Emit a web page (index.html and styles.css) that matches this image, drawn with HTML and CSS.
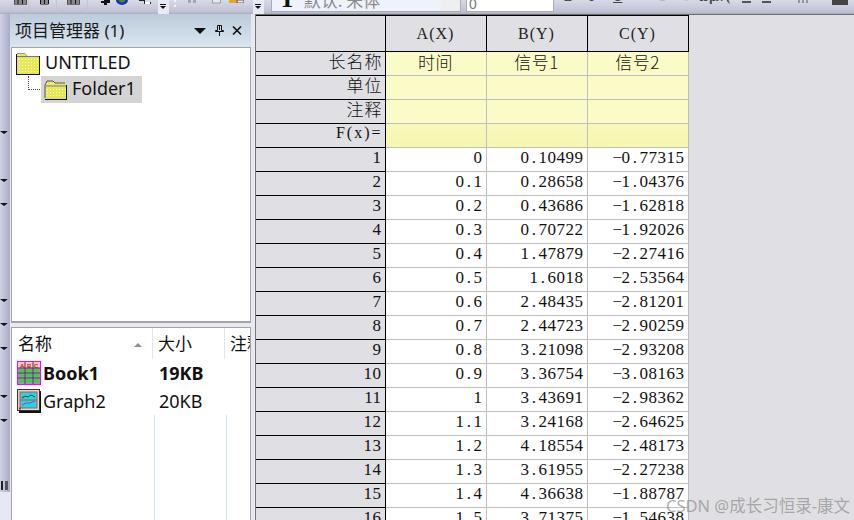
FILE: index.html
```html
<!DOCTYPE html>
<html lang="zh">
<head>
<meta charset="utf-8">
<title>Origin</title>
<link rel="stylesheet" href="styles.css">
</head>
<body>
<div class="app">
  <header class="toolbar">
    <div class="tbgroup g1">
      <svg class="ic i1" width="13" height="5" viewBox="0 0 13 5"><path d="M0 0h13v4H0zM4 0v4M8.500 0v4M0 2h13" fill="#fff" stroke="#111"/></svg>
      <span class="sep s1"></span>
      <svg class="ic i2" width="9" height="5" viewBox="0 0 9 5"><path d="M.5 0h8v4h-8zM4.500 0v4M0 2h9" fill="#fff" stroke="#111"/></svg>
      <span class="sep s2"></span>
      <svg class="ic i3" width="13" height="5" viewBox="0 0 13 5"><path d="M0 0h13v4H0zM4 0v4M8.500 0v4M0 2h13" fill="#fff" stroke="#111"/></svg>
      <span class="sep s3"></span>
      <svg class="ic i4" width="9" height="5" viewBox="0 0 9 5"><path d="M3 0h6v3H6v2H3V3H0V1h3z" fill="#111"/></svg>
      <svg class="ic i5" width="12" height="5" viewBox="0 0 12 5"><path d="M0 0h12a6 5 0 0 1-12 0z" fill="#1d2fb8"/><path d="M3 0h6a3 2.500 0 0 1-6 0z" fill="#4a8a2a"/></svg>
      <svg class="ic i6" width="12" height="5" viewBox="0 0 12 5"><path d="M0 0h6v2h6v2H5V1H0z" fill="#222"/><path d="M6 2h5v2H6z" fill="#fff"/></svg>
      <span class="chev"></span>
    </div>
    <div class="tbgroup g2">
      <span class="grip"></span>
      <svg class="ic i7" width="9" height="4" viewBox="0 0 9 4"><path d="M0 0h3v3H0zM5 0h3v3H5z" fill="#a6a7b2"/></svg>
      <svg class="ic i8" width="9" height="4" viewBox="0 0 9 4"><path d="M.5 0v3h8V0" fill="#e8e8ee" stroke="#9a9aa6"/></svg>
      <svg class="ic i9" width="15" height="3" viewBox="0 0 15 3"><path d="M0 0h8v3H0z" fill="#e8a23a"/><path d="M8 0h7v3H8z" fill="#eee" stroke="#555"/></svg>
      <span class="chev c2"></span>
    </div>
    <span class="grip g3"></span>
    <div class="combo c-font"><span class="t-icon">T</span><span class="combo-text">默认: 宋体</span></div>
    <div class="combo c-size"><span class="combo-num">0</span></div>
    <div class="tbgroup g4">
      <span class="fmt b">B</span><span class="fmt i">I</span><span class="fmt u">U</span>
      <span class="fmt sup">2</span><span class="fmt sub">1</span>
      <span class="fmt wp">ωp</span><span class="fmt lam">λ</span><span class="fmt par">(</span>
      <span class="dash d1"></span><span class="dash d2"></span>
      <svg class="ic i10" width="10" height="3" viewBox="0 0 10 3"><path d="M1 0v3M5 0v3M9 0v3" stroke="#555"/></svg>
      <span class="block"></span>
    </div>
  </header>

  <div class="main">
    <aside class="strip">
      <i class="tick"></i><i></i><i class="tick"></i><i class="tick"></i><i></i><i></i><i></i><i class="tick"></i><i class="tick"></i><i class="tick"></i><i></i><i class="tick"></i><i class="tick"></i>
      <b class="more"></b>
    </aside>

    <section class="panel">
      <div class="title">
        <span class="title-text">项目管理器 (1)</span>
        <svg class="tb tb-a" width="12" height="6" viewBox="0 0 12 6"><path d="M0 0h12L6 6z" fill="#111"/></svg>
        <svg class="tb tb-b" width="9" height="11" viewBox="0 0 9 11"><path d="M2.500.5h4v5h2v1H.5v-1h2zM4.500 7v4M4.500 1v4" fill="none" stroke="#111"/></svg>
        <svg class="tb tb-c" width="10" height="9" viewBox="0 0 10 9"><path d="M1 .5l8 8M9 .5l-8 8" stroke="#111" stroke-width="1.600"/></svg>
      </div>

      <div class="tree">
        <div class="node root">
          <svg class="folder" width="24" height="22" viewBox="0 0 24 22"><defs><pattern id="dots" width="3" height="3" patternUnits="userSpaceOnUse"><rect width="3" height="3" fill="#e7e75a"/><rect width="1" height="1" fill="#ffffb0"/></pattern></defs><path d="M1 4V1.500L2 .5h7l2 2.500h12v18H1z" fill="url(#dots)"/><path d="M1 3.500h22" stroke="#777"/><path d="M1 .5h8l2 2.500" fill="none" stroke="#999"/><path d="M0 21.500h24M23.500 3v19M.5 1v20" stroke="#111" fill="none"/></svg>
          <span>UNTITLED</span>
        </div>
        <div class="node child">
          <span class="link"></span>
          <span class="selected">
            <svg class="folder" width="23" height="20" viewBox="0 0 23 20"><path d="M1 5l2-4h6l2 2h10l1 2v13H1z" fill="url(#dots)"/><path d="M1 18V5l2-4h6l2 2h10" fill="none" stroke="#555"/><path d="M2 6h20" stroke="#777"/><path d="M1 19.500h22M22.500 5v15" stroke="#111" fill="none"/></svg>
            <span>Folder1</span>
          </span>
        </div>
      </div>

      <div class="list">
        <div class="list-head">
          <div class="h h-name">名称<span class="sort"></span></div>
          <div class="h h-size">大小</div>
          <div class="h h-note">注释</div>
        </div>
        <div class="item strong">
          <svg class="file" width="24" height="24" viewBox="0 0 24 24">
            <rect x=".5" y=".5" width="23" height="23" fill="#9d93b8" stroke="#f0f"/>
            <rect x="1" y="1" width="22" height="6" fill="#f8c8c8"/>
            <text class="mini" x="3" y="6.500">A</text><text class="mini" x="10" y="6.500">B</text><text class="mini" x="17" y="6.500">C</text>
            <path d="M8 1v22M16 1v22M1 7h22M1 12h22M1 17h22" stroke="#444"/>
            <path d="M2 9.500h5M9 9.500h6M17 9.500h5M2 14.500h5M9 14.500h6M17 14.500h5M2 20h5M9 20h6M17 20h5" stroke="#20e020" stroke-width="2"/>
          </svg>
          <span class="n">Book1</span><span class="s">19KB</span>
        </div>
        <div class="item">
          <svg class="file" width="24" height="24" viewBox="0 0 24 24">
            <rect x="2" y="2" width="22" height="22" fill="#111"/>
            <rect x=".5" y=".5" width="22" height="21" fill="#d8d8d8" stroke="#333"/>
            <rect x="3" y="3" width="17" height="16" fill="#19dbe0" stroke="#e04040"/>
            <path d="M3 11h17" stroke="#e04040"/>
            <path d="M5 9l3-2 3 1 3-2 4 2" fill="none" stroke="#063a50"/>
            <path d="M5 16l4-2 4 0 5-2" fill="none" stroke="#b030d0"/>
            <path d="M2 19.500h2" stroke="#e02020" stroke-width="2"/>
          </svg>
          <span class="n">Graph2</span><span class="s">20KB</span>
        </div>
        <div class="rest"><span></span><span></span></div>
      </div>
    </section>

    <section class="sheet">
      <table class="grid">
        <colgroup><col class="c0"><col class="cd"><col class="cd"><col class="cd"></colgroup>
        <thead>
          <tr class="r-head"><th></th><th>A(X)</th><th>B(Y)</th><th>C(Y)</th></tr>
        </thead>
        <tbody>
          <tr class="lab top"><th>长名称</th><td>时间</td><td>信号1</td><td>信号2</td></tr>
          <tr class="lab"><th>单位</th><td></td><td></td><td></td></tr>
          <tr class="lab"><th>注释</th><td></td><td></td><td></td></tr>
          <tr class="lab fx"><th>F(x)=</th><td></td><td></td><td></td></tr>
          <tr><th>1</th><td>0</td><td>0<u>.</u>10499</td><td><u>−</u>0<u>.</u>77315</td></tr>
          <tr><th>2</th><td>0<u>.</u>1</td><td>0<u>.</u>28658</td><td><u>−</u>1<u>.</u>04376</td></tr>
          <tr><th>3</th><td>0<u>.</u>2</td><td>0<u>.</u>43686</td><td><u>−</u>1<u>.</u>62818</td></tr>
          <tr><th>4</th><td>0<u>.</u>3</td><td>0<u>.</u>70722</td><td><u>−</u>1<u>.</u>92026</td></tr>
          <tr><th>5</th><td>0<u>.</u>4</td><td>1<u>.</u>47879</td><td><u>−</u>2<u>.</u>27416</td></tr>
          <tr><th>6</th><td>0<u>.</u>5</td><td>1<u>.</u>6018</td><td><u>−</u>2<u>.</u>53564</td></tr>
          <tr><th>7</th><td>0<u>.</u>6</td><td>2<u>.</u>48435</td><td><u>−</u>2<u>.</u>81201</td></tr>
          <tr><th>8</th><td>0<u>.</u>7</td><td>2<u>.</u>44723</td><td><u>−</u>2<u>.</u>90259</td></tr>
          <tr><th>9</th><td>0<u>.</u>8</td><td>3<u>.</u>21098</td><td><u>−</u>2<u>.</u>93208</td></tr>
          <tr><th>10</th><td>0<u>.</u>9</td><td>3<u>.</u>36754</td><td><u>−</u>3<u>.</u>08163</td></tr>
          <tr><th>11</th><td>1</td><td>3<u>.</u>43691</td><td><u>−</u>2<u>.</u>98362</td></tr>
          <tr><th>12</th><td>1<u>.</u>1</td><td>3<u>.</u>24168</td><td><u>−</u>2<u>.</u>64625</td></tr>
          <tr><th>13</th><td>1<u>.</u>2</td><td>4<u>.</u>18554</td><td><u>−</u>2<u>.</u>48173</td></tr>
          <tr><th>14</th><td>1<u>.</u>3</td><td>3<u>.</u>61955</td><td><u>−</u>2<u>.</u>27238</td></tr>
          <tr><th>15</th><td>1<u>.</u>4</td><td>4<u>.</u>36638</td><td><u>−</u>1<u>.</u>88787</td></tr>
          <tr><th>16</th><td>1<u>.</u>5</td><td>3<u>.</u>71375</td><td><u>−</u>1<u>.</u>54638</td></tr>
        </tbody>
      </table>
    </section>
  </div>
  <div class="watermark">CSDN @成长习恒录-康文</div>
</div>
</body>
</html>
```

FILE: styles.css
```css
* { box-sizing: border-box; }
html, body { margin: 0; padding: 0; height: 100%; overflow: hidden; }
body { font-family: "Noto Sans", "Noto Sans CJK SC", sans-serif; background: #e6e8f4; }

.app { position: relative; width: 854px; height: 520px; display: flex; flex-direction: column; overflow: hidden; }

/* toolbar */
.toolbar { height: 14px; flex: none; display: flex; overflow: hidden; background: linear-gradient(#d9dae6, #bfc1d4 85%, #a9abbf); }
.tbgroup { display: flex; align-items: flex-start; height: 14px; position: relative; }
.g1 { width: 170px; padding-left: 14px; }
.g2 { width: 88px; }
.g4 { flex: 1; padding-left: 2px; }
.ic { flex: none; display: block; }
.i1 { margin-right: 1px; }
.sep { width: 1px; height: 13px; background: #c4c5ce; flex: none; }
.s1 { margin-right: 11px; }
.i2 { margin-right: 7px; }
.s2 { display: block; margin-right: 10px; }
.i3 { margin-right: 7px; }
.s3 { margin-right: 13px; }
.i4 { margin-right: 6px; }
.i5 { margin-right: 11px; }
.chev { position: absolute; right: 1px; top: 0; width: 11px; height: 14px; background: #e8eaf6; }
.chev::before { content: ""; position: absolute; left: 2px; top: 4px; width: 6px; height: 1px; background: #111; }
.chev::after { content: ""; position: absolute; left: 2px; top: 6px; border: 3px solid transparent; border-top-color: #111; border-bottom: 0; }
.c2 { right: -6px; }
.grip { width: 2px; height: 10px; flex: none; margin: 0 12px 0 4px; background: repeating-linear-gradient(#f4f4fa 0 2px, transparent 2px 5px); }
.g3 { margin: 0 7px 0 4px; align-self: flex-start; }
.i7 { margin-right: 15px; }
.i8 { margin-right: 8px; }
.combo { flex: none; height: 12px; background: #f2f2f4; border: 1px solid #a9abb8; border-top: 0; overflow: hidden; display: flex; align-items: flex-end; }
.c-font { width: 190px; background: linear-gradient(90deg, #eef2fa 0, #eef2fa 90%, #efeff1 90%); padding-left: 7px; margin-right: 5px; }
.c-size { width: 88px; background: #fff; padding-left: 2px; margin-right: 2px; }
.t-icon { font: bold 25px/20px "Liberation Serif", serif; color: #111; margin-right: 8px; margin-bottom: 2px; }
.combo-text { font: 17px/22px "Noto Sans CJK SC", sans-serif; color: #8a8a8a; margin-bottom: 0; white-space: nowrap; }
.combo-num { font: 14px/14px "Liberation Sans", sans-serif; color: #777; }

.fmt { display: block; flex: none; font: bold 13px/13px "Liberation Serif", serif; color: #444; margin-top: -10px; }
.b { margin-left: 6px; width: 25px; }
.i { width: 24px; }
.u { width: 46px; text-decoration: underline; }
.sup { width: 24px; color: #b9bac6; font-weight: normal; }
.sub { width: 15px; color: #b9bac6; font-weight: normal; }
.wp { width: 18px; font-family: "Liberation Sans", sans-serif; }
.lam { width: 10px; }
.par { width: 16px; }
.dash { height: 2px; flex: none; width: 9px; background: #555; margin-top: 1px; }
.d1 { margin-right: 11px; }
.d2 { margin-right: 27px; }
.i10 { margin-right: 24px; }
.block { width: 16px; height: 5px; flex: none; background: #444; }

/* body */
.main { flex: 1; min-height: 0; display: flex; }
.strip { position: relative; flex: none; width: 10px; height: 478px; padding-top: 106px; display: grid; grid-auto-rows: 24px; background: linear-gradient(90deg, #cfd1e3, #a9abc6); }
.strip i { display: block; position: relative; }
.tick::after { content: ""; position: absolute; left: 0; top: 11px; border: 3px solid transparent; border-top-color: #111; border-left-width: 4px; border-right-width: 4px; border-bottom: 0; }
.tick::before { content: ""; position: absolute; left: 4px; top: 11px; width: 4px; height: 1px; background: #fff; }
.more { position: absolute; left: 1px; bottom: 2px; width: 7px; height: 9px; border-left: 2px solid #222; border-right: 3px solid #555; }

.panel { flex: none; width: 246px; display: flex; flex-direction: column; border-right: 1px solid #777; padding-right: 4px; background: #e6e8f4; }
.title { height: 33px; flex: none; padding: 0 9px 0 5px; display: flex; align-items: center; background: linear-gradient(#bccbdb, #dae5ef); }
.title-text { font-size: 17px; line-height: 24px; color: #1a1a1a; margin-right: auto; white-space: nowrap; }
.tb { flex: none; }
.tb-a { margin-right: 9px; }
.tb-b { margin-right: 8px; }

.tree { height: 276px; flex: none; background: #fff; border: 1px solid #a3a3a3; border-bottom-width: 2px; padding-top: 3px; margin-left: 1px; }
.node { display: flex; font-size: 18px; line-height: 24px; color: #111; white-space: nowrap; }
.root { height: 25px; padding-left: 4px; align-items: center; }
.root .folder { margin-right: 5px; }
.root span { margin-top: -3px; }
.child { padding-left: 16px; align-items: flex-start; }
.link { width: 14px; height: 14px; flex: none; border-left: 1px dotted #444; border-bottom: 1px dotted #444; }
.selected { display: flex; align-items: center; width: 101px; height: 27px; padding-left: 3px; background: #d4d4d4; margin-left: -1px; }
.selected .folder { margin-right: 5px; }
.selected span { margin-top: -3px; }

.list { flex: 1; min-height: 0; margin: 4px 0 0 1px; background: #fff; border: 1px solid #a3a3a3; border-bottom: 0; display: flex; flex-direction: column; overflow: hidden; }
.list-head { height: 31px; flex: none; display: flex; font-size: 17px; line-height: 31px; color: #111; }
.h { flex: none; position: relative; padding-left: 5px; border-right: 1px solid #e4e4e4; white-space: nowrap; overflow: hidden; }
.h-name { width: 141px; padding-left: 6px; }
.h-size { width: 72px; }
.h-note { width: 25px; border-right: 0; }
.sort { position: absolute; left: 122px; top: 15px; border: 4px solid transparent; border-bottom: 4px solid #8e8e8e; border-top: 0; }

.item { height: 28px; flex: none; display: flex; align-items: center; font-size: 18px; color: #111; white-space: nowrap; padding-left: 5px; }
.item span { margin-top: -1px; }
.file { flex: none; margin-right: 2px; }
.mini { font: bold 6px "Liberation Sans", sans-serif; fill: #e01010; }
.n { width: 116px; }
.strong .n, .strong .s { font-weight: 700; }
.rest { flex: 1; display: flex; padding-left: 142px; }
.rest span { display: block; flex: none; width: 72px; border-left: 1px solid #cfe2fb; }

/* worksheet */
.sheet { flex: 1; min-width: 0; height: 506px; overflow: hidden; background: #e0dfe3; border-top: 1px solid #6d6d6d; }
.grid { table-layout: fixed; width: 432px; border-collapse: collapse; font: 17px/20px "Liberation Serif", "Noto Sans CJK SC", serif; color: #111; }
.c0 { width: 129px; }
.cd { width: 101px; }
.grid th, .grid td { height: 24px; padding: 0 3px 3px 0; font-weight: 400; text-align: right; border: 1px solid #bfbfbf; background: #fff; letter-spacing: .5px; white-space: nowrap; overflow: hidden; }
.grid th { background: #e0dfe3; border: 1px solid #000; border-left: 0; }
.grid td u { display: inline-block; width: 9px; text-decoration: none; text-align: center; }
.grid .r-head th { height: 36px; text-align: center; font-size: 16px; padding: 0; border-top: 1px solid #000; letter-spacing: 1px; color: #222; }
.grid .lab td { background: #fbfbc8; text-align: center; padding: 0 0 3px; line-height: 18px; font-family: "Noto Sans CJK SC", sans-serif; font-weight: 300; font-size: 17px; }
.grid .lab th { padding: 0 2px 5px 0; line-height: 18px; font-family: "Noto Sans CJK SC", sans-serif; font-weight: 300; font-size: 17px; letter-spacing: 1px; }
.grid .fx td { background: linear-gradient(#f8f8bf, #f6f6ae); }
.grid .fx th { font-family: "Liberation Serif", serif; font-weight: 400; font-size: 16px; letter-spacing: 2px; }

.watermark { position: absolute; right: 4px; top: 495px; font: 16.500px/22px "Noto Sans", "Noto Sans CJK SC", sans-serif; color: rgba(140, 140, 140, .7); white-space: nowrap; }
```
